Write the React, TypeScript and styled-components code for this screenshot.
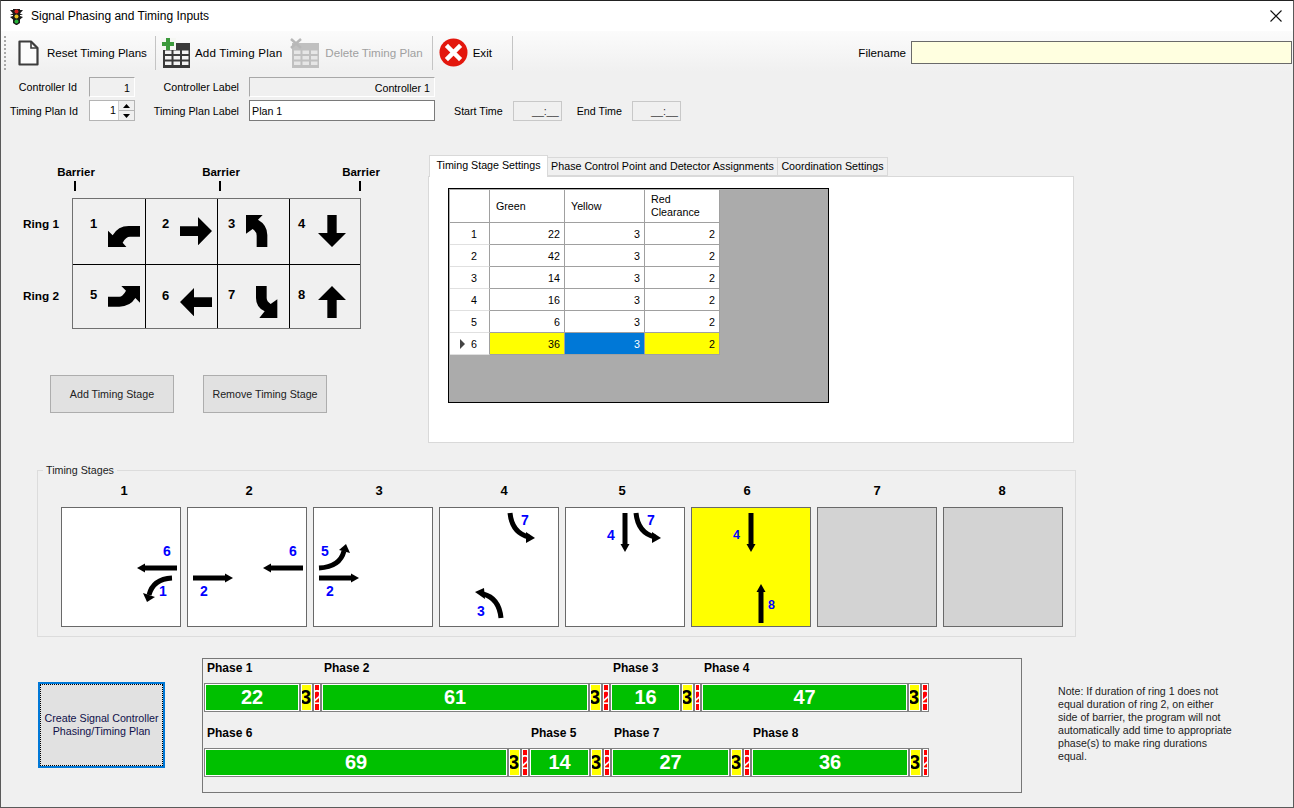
import styled, { createGlobalStyle } from "styled-components";

const GlobalStyle = createGlobalStyle`
  html, body {
    margin: 0;
    padding: 0;
    background: #f0f0f0;
  }
  * {
    box-sizing: border-box;
  }
`;

const Window = styled.div`
  width: 1294px;
  height: 808px;
  overflow: hidden;
  background: #f0f0f0;
  border: 1px solid #5a5a5a;
  border-top-color: #222;
  font-family: "Liberation Sans", Arial, sans-serif;
  font-size: 10.7px;
  color: #000;
`;

const TitleBar = styled.div`
  height: 30px;
  background: #fff;
  display: flex;
  align-items: center;
  padding: 0 9px;
  font-size: 12px;
`;

const TitleText = styled.span`
  margin-left: 8px;
  flex: 1;
`;

const Toolbar = styled.div`
  height: 41px;
  background: linear-gradient(#fbfbfb, #f0f0f0);
  display: flex;
  align-items: center;
  padding: 2px 0 0 3px;
  font-size: 11.6px;
`;

const Grip = styled.div`
  width: 2px;
  height: 34px;
  background: repeating-linear-gradient(#a8a8a8 0 2px, transparent 2px 4px);
`;

const ToolButton = styled.div<{ $left: number; $gap: number; $disabled?: boolean; $spacing?: number }>`
  display: flex;
  align-items: center;
  margin-left: ${({ $left }) => $left}px;
  gap: ${({ $gap }) => $gap}px;
  color: ${({ $disabled }) => ($disabled ? "#a0a0a0" : "#000")};
  letter-spacing: ${({ $spacing }) => $spacing ?? 0}px;
`;

const ToolSep = styled.div<{ $left: number }>`
  width: 1px;
  height: 34px;
  background: #c4c4c4;
  margin-left: ${({ $left }) => $left}px;
`;

const FilenameField = styled.div`
  margin-left: auto;
  margin-right: 1px;
  display: flex;
  align-items: center;
  gap: 5px;
`;

const FilenameInput = styled.div`
  width: 381px;
  height: 23px;
  background: #ffffe0;
  border: 1px solid #6a6a6a;
`;

const Form = styled.div`
  padding: 5px 0 0 9px;
  display: grid;
  grid-template-columns: 67px 58px 114px 186px auto;
  grid-template-rows: 20px 21px;
  row-gap: 3px;
  align-items: center;
`;

const FieldLabel = styled.span`
  text-align: right;
  padding-right: 10px;
  white-space: nowrap;
`;

const IdLabel = styled.span`
  text-align: right;
  white-space: nowrap;
`;

const ReadBox = styled.div`
  height: 20px;
  border: 1px solid #c6c6c6;
  border-top-color: #a8a8a8;
  border-left-color: #a8a8a8;
  border-bottom-color: #fff;
  border-right-color: #fff;
  background: #f0f0f0;
  text-align: right;
  padding: 3px 4px 0 0;
  line-height: 14px;
`;

const IdBox = styled(ReadBox)`
  margin-left: 12px;
`;

const TextInput = styled.div`
  height: 21px;
  border: 1px solid #7a7a7a;
  background: #fff;
  padding: 3px 2px;
  line-height: 14px;
  white-space: nowrap;
`;

const Spinner = styled.div`
  height: 21px;
  margin-left: 12px;
  border: 1px solid #b4b4b4;
  background: #fff;
  display: flex;
  justify-content: flex-end;
  line-height: 18px;
`;

const SpinButtons = styled.div`
  width: 16px;
  margin-left: 2px;
  display: flex;
  flex-direction: column;
  background: #f0f0f0;
  border-left: 1px solid #d0d0d0;
`;

const SpinPart = styled.div<{ $down?: boolean }>`
  flex: 1;
  display: flex;
  align-items: center;
  justify-content: center;
  border-top: ${({ $down }) => ($down ? "1px solid #b4b4b4" : "0")};
`;

const TimeRow = styled.div`
  display: flex;
  align-items: center;
  padding-left: 19px;
`;

const TimeLabel = styled.span`
  white-space: nowrap;
`;

const TimeBox = styled.div<{ $left: number; $right: number }>`
  width: 49px;
  height: 20px;
  margin: 0 ${({ $right }) => $right}px 0 ${({ $left }) => $left}px;
  border: 1px solid #c8c8c8;
  background: #f0f0f0;
  text-align: right;
  padding-right: 2px;
  line-height: 18px;
  color: #333;
`;

const Middle = styled.div`
  margin-top: 34px;
  height: 288px;
  display: flex;
`;

const LeftColumn = styled.div`
  width: 427px;
  flex: none;
`;

const BarrierRow = styled.div`
  display: grid;
  grid-template-columns: 145px 140px 40px;
  padding: 10px 0 0 55px;
`;

const Barrier = styled.div`
  width: 40px;
  text-align: center;
  font-weight: bold;
  font-size: 11.5px;
  line-height: 14px;
`;

const Tick = styled.div`
  width: 2px;
  height: 10px;
  margin: 2px 0 0 18px;
  background: #000;
`;

const RingArea = styled.div`
  margin-top: 7px;
  display: flex;
`;

const RingLabels = styled.div`
  width: 71px;
  display: grid;
  grid-template-rows: 66px 65px;
  padding-left: 22px;
  font-weight: bold;
  font-size: 11.8px;
`;

const RingLabel = styled.div<{ $top: number }>`
  padding-top: ${({ $top }) => $top}px;
`;

const RingGrid = styled.div`
  display: grid;
  grid-template-columns: 72px 71px 71px 70px;
  grid-template-rows: 65px 63px;
  width: 289px;
  height: 131px;
  background: #000;
  gap: 1px;
  border: 1px solid #707070;
`;

const RingCell = styled.div<{ $pl: number; $gap: number; $top: number; $numTop: number }>`
  background: #f0f0f0;
  display: flex;
  align-items: flex-start;
  padding: ${({ $top }) => $top}px 0 0 ${({ $pl }) => $pl}px;
  gap: ${({ $gap }) => $gap}px;

  & > span {
    font-weight: bold;
    font-size: 13px;
    line-height: 14px;
    margin-top: ${({ $numTop }) => $numTop}px;
  }
`;

const StageButtons = styled.div`
  margin: 46px 0 0 49px;
  display: flex;
  gap: 29px;
`;

const PlainButton = styled.div`
  width: 124px;
  height: 38px;
  background: #e1e1e1;
  border: 1px solid #adadad;
  display: flex;
  align-items: center;
  justify-content: center;
  color: #222;
`;

const TabColumn = styled.div`
  width: 646px;
  display: flex;
  flex-direction: column;
`;

const TabStrip = styled.div`
  height: 21px;
  display: flex;
  align-items: flex-end;
  padding-left: 1px;
`;

const Tab = styled.div<{ $active?: boolean; $w: number }>`
  width: ${({ $w }) => $w}px;
  height: ${({ $active }) => ($active ? 22 : 19)}px;
  margin-bottom: ${({ $active }) => ($active ? -1 : 0)}px;
  background: ${({ $active }) => ($active ? "#fff" : "#f0f0f0")};
  border: 1px solid #d9d9d9;
  border-bottom: ${({ $active }) => ($active ? "0" : "1px solid #d9d9d9")};
  margin-right: -1px;
  text-align: center;
  line-height: ${({ $active }) => ($active ? 19 : 17)}px;
  white-space: nowrap;
  position: relative;
`;

const TabPanel = styled.div`
  flex: 1;
  background: #fff;
  border: 1px solid #d9d9d9;
  padding: 11px 0 0 19px;
`;

const GridBox = styled.div`
  width: 381px;
  height: 215px;
  background: #ababab;
  border: 1px solid #000;
  padding: 1px 0 0 1px;
`;

const DataGrid = styled.div`
  display: grid;
  grid-template-columns: 40px 75px 80px 75px;
  grid-template-rows: 33px repeat(6, 22px);
  width: 270px;
`;

const HeadCell = styled.div`
  background: #fff;
  border-right: 1px solid #a0a0a0;
  border-bottom: 1px solid #a0a0a0;
  display: flex;
  align-items: center;
  padding-left: 6px;
  line-height: 13px;
`;

const RowHead = styled.div`
  background: #fff;
  border-right: 1px solid #a0a0a0;
  border-bottom: 1px solid #e0e0e0;
  display: flex;
  align-items: center;
  justify-content: flex-end;
  padding-right: 12px;
  gap: 6px;
`;

const DataCell = styled.div<{ $bg?: string; $color?: string }>`
  background: ${({ $bg }) => $bg ?? "#fff"};
  color: ${({ $color }) => $color ?? "#000"};
  border-right: 1px solid #a0a0a0;
  border-bottom: 1px solid #a0a0a0;
  display: flex;
  align-items: center;
  justify-content: flex-end;
  padding-right: 4px;
`;

const RowMark = styled.i`
  width: 0;
  height: 0;
  border-left: 5px solid #444;
  border-top: 5px solid transparent;
  border-bottom: 5px solid transparent;
`;

const StageField = styled.fieldset`
  margin: 20px 0 0 36px;
  padding: 5px 0 9px 23px;
  width: 1039px;
  border: 1px solid #dcdcdc;
  min-inline-size: 0;
`;

const StageLegend = styled.legend`
  margin-left: -18px;
  padding: 0 3px 0 3px;
  line-height: 14px;
  color: #222;
`;

const StageGrid = styled.div`
  display: grid;
  grid-template-columns: repeat(8, 120px);
  column-gap: 6px;
`;

const StageHead = styled.div<{ $nudge: number }>`
  height: 25px;
  padding-top: 1px;
  text-align: center;
  font-weight: bold;
  font-size: 13px;
  padding-left: ${({ $nudge }) => Math.max(0, $nudge * 2)}px;
  padding-right: ${({ $nudge }) => Math.max(0, -$nudge * 2)}px;
`;

const StageBox = styled.div<{ $fill: string }>`
  height: 120px;
  position: relative;
  background: ${({ $fill }) => $fill};
  border: 1px solid #696969;
`;

const StageSvg = styled.svg`
  position: absolute;
  left: -1px;
  top: -1px;
`;

const StageNum = styled.span<{ $x: number; $y: number; $small?: boolean }>`
  position: absolute;
  left: ${({ $x }) => $x - 1}px;
  top: ${({ $y }) => $y - 1}px;
  color: #0000ff;
  font-size: ${({ $small }) => ($small ? 12.5 : 14)}px;
  line-height: 13px;
  font-weight: bold;
`;

const Bottom = styled.div`
  margin-top: 21px;
  display: flex;
  align-items: flex-start;
  padding-left: 37px;
`;

const CreateButton = styled.div`
  width: 127px;
  height: 86px;
  margin-top: 24px;
  background: #e1e1e1;
  border: 2px solid #0078d7;
  outline: 1px dotted #000;
  outline-offset: -3px;
  display: flex;
  align-items: center;
  justify-content: center;
  text-align: center;
  line-height: 13px;
  color: #10104a;
`;

const PhasePanel = styled.div`
  width: 820px;
  height: 135px;
  margin-left: 37px;
  border: 1px solid #777;
  padding-left: 1px;
`;

const PhaseRow = styled.div<{ $gap: number }>`
  display: flex;
  margin-top: ${({ $gap }) => $gap}px;
`;

const PhaseTitle = styled.div<{ $pad: number }>`
  height: 20px;
  margin-bottom: 4px;
  padding-left: ${({ $pad }) => $pad}px;
  font-weight: bold;
  font-size: 12px;
  line-height: 18px;
  white-space: nowrap;
`;

const SegmentRow = styled.div`
  display: flex;
`;

const Segment = styled.div<{ $w: number }>`
  width: ${({ $w }) => $w}px;
  height: 29px;
  background: #fff;
  border: 1px solid #808080;
  padding: 1px;
`;

const SegmentFill = styled.div<{ $fill: string; $color: string; $end?: boolean; $thin?: boolean }>`
  height: 100%;
  background: ${({ $fill }) => $fill};
  color: ${({ $color }) => $color};
  overflow: hidden;
  display: flex;
  align-items: center;
  justify-content: ${({ $end }) => ($end ? "flex-end" : "center")};
  font-weight: ${({ $thin }) => ($thin ? "normal" : "bold")};
  font-size: 20px;
`;

const Note = styled.div`
  width: 174px;
  margin: 27px 0 0 36px;
  font-size: 10.6px;
  line-height: 13px;
  color: #222;
`;

function TrafficLight() {
  return (
    <svg width="13" height="17" viewBox="0 0 13 17">
      <path d="M0 2h3V1h7v1h3L10 5.500 13 7h-3v1l3 1-3 2.500V15l-3 2H6l-3-2v-3.500L0 9l3-1V7H0l3-1.500z" fill="#1a1a1a" />
      <circle cx="6.500" cy="3.500" r="2" fill="#d8201c" />
      <circle cx="6.500" cy="8.500" r="2" fill="#e6c21e" />
      <circle cx="6.500" cy="13.500" r="2" fill="#27b43a" />
    </svg>
  );
}

function CloseIcon() {
  return (
    <svg width="12" height="12" viewBox="0 0 12 12" style={{ marginRight: 2 }}>
      <path d="M.5.5l11 11M11.500.5l-11 11" stroke="#111" strokeWidth="1.100" fill="none" />
    </svg>
  );
}

function DocIcon() {
  return (
    <svg width="21" height="26" viewBox="0 0 21 26">
      <path d="M1.500 1.500H13L19.500 8v16.500h-18z" fill="#fbfbfb" stroke="#3c3c3c" strokeWidth="2.200" strokeLinejoin="round" />
      <path d="M13 1.500V8h6.500" fill="none" stroke="#3c3c3c" strokeWidth="1.600" />
    </svg>
  );
}

function TableIcon({ disabled }: { disabled?: boolean }) {
  const dark = disabled ? "#c0c0c0" : "#3a3a3a";
  const cells = [];
  for (let r = 0; r < 3; r++) {
    for (let c = 0; c < 3; c++) {
      cells.push(<rect key={`${r}-${c}`} x={4 + c * 8.500} y={12.500 + r * 5.500} width="6.500" height="3.500" fill={disabled ? "#e6e6e6" : "#f4f4f4"} />);
    }
  }
  return (
    <svg width="30" height="30" viewBox="0 0 30 30">
      <rect x="2" y="5" width="27" height="25" fill={dark} />
      {cells}
      {disabled ? (
        <path d="M1 1l10 9M11 1L1 10" stroke="#b8b8b8" strokeWidth="2.500" />
      ) : (
        <>
          <rect x="0" y="0" width="15" height="12" fill="#f5f7f3" />
          <path d="M5 0h4v4h4v4H9v4H5V8H1V4h4z" fill="#3c9a3c" />
        </>
      )}
    </svg>
  );
}

function ExitIcon() {
  return (
    <svg width="29" height="29" viewBox="0 0 29 29">
      <circle cx="14.500" cy="14.500" r="14" fill="#e3170d" />
      <path d="M9 9l11 11M20 9L9 20" stroke="#fff" strokeWidth="4.500" strokeLinecap="square" />
    </svg>
  );
}

const bigArrows: Record<string, { w: number; h: number; d: string }> = {
  sw: { w: 96, h: 64, d: "M96 0V32H66Q54 32 44 50L56 64H0V14L14 28Q30 0 62 0Z" },
  nw: { w: 64, h: 96, d: "M64 96H32V62Q32 50 20 42L0 56V0H50L36 14Q64 30 64 60Z" },
  ne: { w: 96, h: 64, d: "M0 32H34Q44 32 54 14L40 0H96V50L82 36Q66 62 34 62H0Z" },
  se: { w: 64, h: 96, d: "M0 0H32V36Q32 46 44 54L64 40V96H10L26 76Q0 64 0 36Z" },
  e: { w: 96, h: 85, d: "M0 28H54V0L96 42 54 85V57H0Z" },
  w: { w: 96, h: 85, d: "M96 28H42V0L0 42 42 85V57H96Z" },
  s: { w: 84, h: 96, d: "M28 0H56V54H84L42 96 0 54H28Z" },
  n: { w: 84, h: 96, d: "M28 96H56V42H84L42 0 0 42H28Z" },
};

function BigArrow({ dir }: { dir: string }) {
  const a = bigArrows[dir];
  return (
    <svg width={a.w / 3} height={a.h / 3} viewBox={`0 0 ${a.w} ${a.h}`}>
      <path d={a.d} fill="#000" />
    </svg>
  );
}

function Straight({ x1, y1, x2, y2 }: { x1: number; y1: number; x2: number; y2: number }) {
  const horizontal = y1 === y2;
  const sign = horizontal ? Math.sign(x2 - x1) : Math.sign(y2 - y1);
  const head = horizontal
    ? `${x2},${y2} ${x2 - sign * 8},${y2 - 4.500} ${x2 - sign * 8},${y2 + 4.500}`
    : `${x2},${y2} ${x2 - 4.500},${y2 - sign * 8} ${x2 + 4.500},${y2 - sign * 8}`;
  return (
    <>
      <line x1={x1} y1={y1} x2={horizontal ? x2 - sign * 6 : x2} y2={horizontal ? y2 : y2 - sign * 6} stroke="#000" strokeWidth="5" />
      <polygon points={head} fill="#000" />
    </>
  );
}

function Curve({ d, head }: { d: string; head: string }) {
  return (
    <>
      <path d={d} stroke="#000" strokeWidth="5" fill="none" />
      <polygon points={head} fill="#000" />
    </>
  );
}

const curve1 = { d: "M111 71Q92 72 88 88", head: "86,95 82,86 94,90" };
const curve5 = { d: "M6 61Q27 60 31 44", head: "33,37 26,43 37,46" };
const curve7 = { d: "M71 6Q73 26 90 30", head: "96,31 87,25 87,36" };
const curve3 = { d: "M62 111Q60 91 44 87", head: "36,85 45,81 46,92" };

const ringCells = [
  { n: "1", dir: "sw", pl: 17, gap: 11, top: 27, numTop: -9 },
  { n: "2", dir: "e", pl: 16, gap: 11, top: 18, numTop: 0 },
  { n: "3", dir: "nw", pl: 10, gap: 11, top: 16, numTop: 2 },
  { n: "4", dir: "s", pl: 8, gap: 13, top: 16, numTop: 2 },
  { n: "5", dir: "ne", pl: 17, gap: 11, top: 21, numTop: 2 },
  { n: "6", dir: "w", pl: 16, gap: 11, top: 23, numTop: 1 },
  { n: "7", dir: "se", pl: 10, gap: 21, top: 21, numTop: 2 },
  { n: "8", dir: "n", pl: 8, gap: 13, top: 21, numTop: 2 },
];

const gridRows = [
  ["22", "3", "2"],
  ["42", "3", "2"],
  ["14", "3", "2"],
  ["16", "3", "2"],
  ["6", "3", "2"],
  ["36", "3", "2"],
];

const stages = [
  {
    nudge: 3,
    fill: "#fff",
    draw: (
      <>
        <Straight x1={116} y1={61} x2={76} y2={61} />
        <Curve {...curve1} />
      </>
    ),
    nums: [
      { t: "6", x: 102, y: 38 },
      { t: "1", x: 98, y: 78 },
    ],
  },
  {
    nudge: 2,
    fill: "#fff",
    draw: (
      <>
        <Straight x1={6} y1={71} x2={46} y2={71} />
        <Straight x1={116} y1={61} x2={76} y2={61} />
      </>
    ),
    nums: [
      { t: "6", x: 102, y: 38 },
      { t: "2", x: 13, y: 78 },
    ],
  },
  {
    nudge: 6,
    fill: "#fff",
    draw: (
      <>
        <Straight x1={6} y1={71} x2={46} y2={71} />
        <Curve {...curve5} />
      </>
    ),
    nums: [
      { t: "5", x: 8, y: 38 },
      { t: "2", x: 13, y: 78 },
    ],
  },
  {
    nudge: 5,
    fill: "#fff",
    draw: (
      <>
        <Curve {...curve7} />
        <Curve {...curve3} />
      </>
    ),
    nums: [
      { t: "7", x: 82, y: 7 },
      { t: "3", x: 38, y: 98 },
    ],
  },
  {
    nudge: -3,
    fill: "#fff",
    draw: (
      <>
        <Straight x1={60} y1={6} x2={60} y2={45} />
        <Curve {...curve7} />
      </>
    ),
    nums: [
      { t: "4", x: 42, y: 22 },
      { t: "7", x: 82, y: 7 },
    ],
  },
  {
    nudge: -4,
    fill: "#ffff00",
    draw: (
      <>
        <Straight x1={60} y1={6} x2={60} y2={45} />
        <Straight x1={70} y1={116} x2={70} y2={77} />
      </>
    ),
    nums: [
      { t: "4", x: 42, y: 22, small: true },
      { t: "8", x: 77, y: 92, small: true },
    ],
  },
  { nudge: 0, fill: "#d3d3d3", draw: null, nums: [] },
  { nudge: -1, fill: "#d3d3d3", draw: null, nums: [] },
];

const ringOne = [
  { name: "Phase 1", pad: 3, g: 96, y: 13, r: 8, label: "22" },
  { name: "Phase 2", pad: 3, g: 268, y: 13, r: 8, label: "61" },
  { name: "Phase 3", pad: 3, g: 71, y: 13, r: 7, label: "16" },
  { name: "Phase 4", pad: 3, g: 207, y: 13, r: 8, label: "47" },
];

const ringTwo = [
  { name: "Phase 6", pad: 3, g: 304, y: 13, r: 8, label: "69" },
  { name: "Phase 5", pad: 2, g: 61, y: 13, r: 8, label: "14" },
  { name: "Phase 7", pad: 3, g: 119, y: 13, r: 8, label: "27" },
  { name: "Phase 8", pad: 2, g: 158, y: 13, r: 7, label: "36" },
];

type Phase = (typeof ringOne)[number];

function PhaseGroup({ phase }: { phase: Phase }) {
  return (
    <div>
      <PhaseTitle $pad={phase.pad}>{phase.name}</PhaseTitle>
      <SegmentRow>
        <Segment $w={phase.g}>
          <SegmentFill $fill="#00c000" $color="#fff">{phase.label}</SegmentFill>
        </Segment>
        <Segment $w={phase.y}>
          <SegmentFill $fill="#ffff00" $color="#000" $end>3</SegmentFill>
        </Segment>
        <Segment $w={phase.r}>
          <SegmentFill $fill="#ff0000" $color="#fff" $thin>2</SegmentFill>
        </Segment>
      </SegmentRow>
    </div>
  );
}

export default function App() {
  return (
    <Window>
      <GlobalStyle />
      <TitleBar>
        <TrafficLight />
        <TitleText>Signal Phasing and Timing Inputs</TitleText>
        <CloseIcon />
      </TitleBar>
      <Toolbar>
        <Grip />
        <ToolButton $left={12} $gap={8}>
          <DocIcon />
          <span>Reset Timing Plans</span>
        </ToolButton>
        <ToolSep $left={8} />
        <ToolButton $left={5} $gap={4} $spacing={0.2}>
          <TableIcon />
          <span>Add Timing Plan</span>
        </ToolButton>
        <ToolButton $left={8} $gap={5} $disabled>
          <TableIcon disabled />
          <span>Delete Timing Plan</span>
        </ToolButton>
        <ToolSep $left={9} />
        <ToolButton $left={6} $gap={5}>
          <ExitIcon />
          <span>Exit</span>
        </ToolButton>
        <ToolSep $left={20} />
        <FilenameField>
          <span>Filename</span>
          <FilenameInput />
        </FilenameField>
      </Toolbar>
      <Form>
        <IdLabel>Controller Id</IdLabel>
        <IdBox>1</IdBox>
        <FieldLabel>Controller Label</FieldLabel>
        <ReadBox>Controller 1</ReadBox>
        <span />
        <IdLabel>Timing Plan Id</IdLabel>
        <Spinner>
          1
          <SpinButtons>
            <SpinPart>
              <svg width="7" height="4" viewBox="0 0 7 4"><path d="M3.500 0L7 4H0z" fill="#000" /></svg>
            </SpinPart>
            <SpinPart $down>
              <svg width="7" height="4" viewBox="0 0 7 4"><path d="M0 0h7L3.500 4z" fill="#000" /></svg>
            </SpinPart>
          </SpinButtons>
        </Spinner>
        <FieldLabel>Timing Plan Label</FieldLabel>
        <TextInput>Plan 1</TextInput>
        <TimeRow>
          <TimeLabel>Start Time</TimeLabel>
          <TimeBox $left={10} $right={15}>__:__</TimeBox>
          <TimeLabel>End Time</TimeLabel>
          <TimeBox $left={10} $right={0}>__:__</TimeBox>
        </TimeRow>
      </Form>
      <Middle>
        <LeftColumn>
          <BarrierRow>
            {[0, 1, 2].map((i) => (
              <Barrier key={i}>
                Barrier
                <Tick />
              </Barrier>
            ))}
          </BarrierRow>
          <RingArea>
            <RingLabels>
              <RingLabel $top={19}>Ring 1</RingLabel>
              <RingLabel $top={25}>Ring 2</RingLabel>
            </RingLabels>
            <RingGrid>
              {ringCells.map((c) => (
                <RingCell key={c.n} $pl={c.pl} $gap={c.gap} $top={c.top} $numTop={c.numTop}>
                  <span>{c.n}</span>
                  <BigArrow dir={c.dir} />
                </RingCell>
              ))}
            </RingGrid>
          </RingArea>
          <StageButtons>
            <PlainButton>Add Timing Stage</PlainButton>
            <PlainButton>Remove Timing Stage</PlainButton>
          </StageButtons>
        </LeftColumn>
        <TabColumn>
          <TabStrip>
            <Tab $active $w={119}>Timing Stage Settings</Tab>
            <Tab $w={231}>Phase Control Point and Detector Assignments</Tab>
            <Tab $w={111}>Coordination Settings</Tab>
          </TabStrip>
          <TabPanel>
            <GridBox>
              <DataGrid>
                <HeadCell />
                <HeadCell>Green</HeadCell>
                <HeadCell>Yellow</HeadCell>
                <HeadCell>Red<br />Clearance</HeadCell>
                {gridRows.map((row, i) => {
                  const current = i === gridRows.length - 1;
                  return [
                    <RowHead key={`h${i}`}>
                      {current && <RowMark />}
                      {i + 1}
                    </RowHead>,
                    <DataCell key={`g${i}`} $bg={current ? "#ffff00" : undefined}>{row[0]}</DataCell>,
                    <DataCell key={`y${i}`} $bg={current ? "#0078d7" : undefined} $color={current ? "#fff" : undefined}>{row[1]}</DataCell>,
                    <DataCell key={`r${i}`} $bg={current ? "#ffff00" : undefined}>{row[2]}</DataCell>,
                  ];
                })}
              </DataGrid>
            </GridBox>
          </TabPanel>
        </TabColumn>
      </Middle>
      <StageField>
        <StageLegend>Timing Stages</StageLegend>
        <StageGrid>
          {stages.map((s, i) => (
            <StageHead key={i} $nudge={s.nudge}>{i + 1}</StageHead>
          ))}
          {stages.map((s, i) => (
            <StageBox key={i} $fill={s.fill}>
              <StageSvg width="120" height="120" viewBox="0 0 120 120">{s.draw}</StageSvg>
              {s.nums.map((n) => (
                <StageNum key={n.t} $x={n.x} $y={n.y} $small={"small" in n}>{n.t}</StageNum>
              ))}
            </StageBox>
          ))}
        </StageGrid>
      </StageField>
      <Bottom>
        <CreateButton>Create Signal Controller<br />Phasing/Timing Plan</CreateButton>
        <PhasePanel>
          <PhaseRow $gap={0}>
            {ringOne.map((p) => <PhaseGroup key={p.name} phase={p} />)}
          </PhaseRow>
          <PhaseRow $gap={12}>
            {ringTwo.map((p) => <PhaseGroup key={p.name} phase={p} />)}
          </PhaseRow>
        </PhasePanel>
        <Note>
          Note: If duration of ring 1 does not equal duration of ring 2, on either side of barrier, the program will not automatically add time to appropriate phase(s) to make ring durations equal.
        </Note>
      </Bottom>
    </Window>
  );
}
